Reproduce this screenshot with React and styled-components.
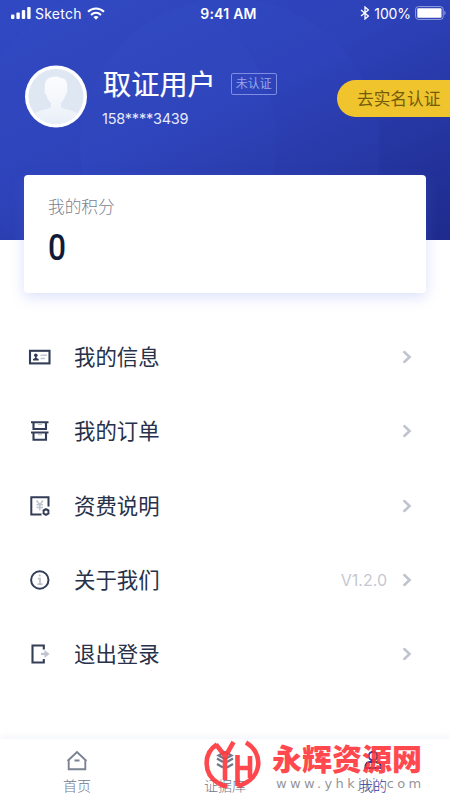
import styled, { createGlobalStyle } from "styled-components";

const GlobalStyle = createGlobalStyle`
  * {
    box-sizing: border-box;
  }
  body {
    margin: 0;
    background-color: white;
    font-family: Inter, "Noto Sans CJK SC", sans-serif;
  }
`;

const Container = styled.div`
  position: relative;
  width: 450px;
  height: 799px;
  overflow: hidden;
  display: flex;
  flex-direction: column;
  background-color: white;
`;

const Header = styled.header`
  position: relative;
  height: 240px;
  flex-shrink: 0;
  color: white;
  background: linear-gradient(155deg, #3049c2 0%, #2d41b8 45%, #1e2b8c 100%);
`;

const HeaderShapes = styled.svg`
  position: absolute;
  top: 0;
  left: 0;
`;

const StatusBar = styled.div`
  position: relative;
  height: 26px;
  padding: 0 4px 0 11px;
  display: grid;
  grid-template-columns: 1fr auto 1fr;
  align-items: center;
  font-size: 14px;
`;

const StatusGroup = styled.div`
  display: flex;
  align-items: center;
  justify-content: ${(props) => (props.$end ? "flex-end" : "flex-start")};
  gap: ${(props) => (props.$end ? "4px" : "5px")};
`;

const Carrier = styled.span`
  margin-left: -1px;
  font-size: 14px;
  letter-spacing: 0.25px;
`;

const Clock = styled.span`
  font-size: 14px;
  font-weight: 600;
  letter-spacing: 0.25px;
`;

const Percent = styled.span`
  font-size: 14px;
  letter-spacing: -0.1px;
`;

const Profile = styled.div`
  position: relative;
  display: flex;
  align-items: flex-start;
  padding: 39px 0 0 25px;
`;

const Info = styled.div`
  margin-left: 15px;
`;

const NameRow = styled.div`
  display: flex;
  align-items: center;
  height: 37px;
`;

const Name = styled.h1`
  margin: 3px 0 0 1px;
  font-size: 28.2px;
  line-height: 37px;
  font-weight: 400;
  -webkit-text-stroke: 0.2px;
`;

const Tag = styled.span`
  width: 46px;
  height: 22px;
  margin-left: 15px;
  border: 1px solid #7f8ee0;
  border-radius: 2px;
  color: #98a5ea;
  font-size: 12px;
  line-height: 20px;
  text-align: center;
`;

const Phone = styled.div`
  margin-top: 7px;
  font-size: 14.5px;
  line-height: 20px;
  letter-spacing: -0.22px;
  color: #e6e9fa;
`;

const VerifyButton = styled.button`
  width: 113px;
  height: 37px;
  margin: 15px 0 0 auto;
  padding: 0 0 1px 20px;
  border: none;
  border-radius: 19px 0 0 19px;
  background-color: #efc42d;
  color: #735c0b;
  font-family: inherit;
  font-size: 16.7px;
  text-align: left;
  white-space: nowrap;
  cursor: pointer;
`;

const Card = styled.section`
  position: relative;
  height: 118px;
  flex-shrink: 0;
  margin: -65px 24px 0;
  padding: 20px 24px;
  border-radius: 4px;
  background-color: white;
  box-shadow: 0 4px 14px rgba(92, 112, 230, 0.22);
`;

const CardLabel = styled.div`
  font-size: 16.7px;
  line-height: 25px;
  font-weight: 300;
  color: #797f90;
`;

const Points = styled.div`
  width: max-content;
  margin-top: 8px;
  font-family: Roboto, sans-serif;
  font-size: 36px;
  line-height: 40px;
  font-weight: 500;
  color: #101b38;
  transform: scaleX(0.88);
  transform-origin: left;
`;

const Menu = styled.nav`
  flex: 1;
  padding: 27px 38px 0 28px;
`;

const MenuItem = styled.a`
  display: flex;
  align-items: center;
  height: 74.3px;
  cursor: pointer;
`;

const MenuLabel = styled.span`
  flex: 1;
  margin-left: 22px;
  font-size: 21.4px;
  line-height: 30px;
  font-weight: 400;
  color: #273149;
`;

const Version = styled.span`
  margin-right: 15px;
  font-size: 16px;
  color: #c5c8d3;
`;

const TabBar = styled.footer`
  height: 60px;
  flex-shrink: 0;
  padding-left: 3px;
  display: grid;
  grid-template-columns: repeat(3, 148px);
  background-color: white;
  box-shadow: 0 -3px 6px rgba(80, 110, 220, 0.06);
`;

const Tab = styled.a`
  display: flex;
  flex-direction: column;
  align-items: center;
  padding-top: 11px;
  font-size: 14px;
  line-height: 20px;
  font-weight: 300;
  color: ${(props) => (props.$active ? "#2b3a9d" : "#70788c")};

  svg {
    margin-bottom: 4px;
  }
`;

const Watermark = styled.div`
  position: absolute;
  left: 204px;
  top: 740px;
  display: flex;
`;

const WatermarkText = styled.div`
  margin-left: 11px;
  width: 160px;
`;

const SiteName = styled.div`
  height: 35px;
  font-size: 30px;
  line-height: 39px;
  font-weight: 900;
  white-space: nowrap;
  color: rgb(255, 48, 54);
  opacity: 0.88;
`;

const SiteUrl = styled.div`
  margin-left: 4px;
  font-family: "DejaVu Sans", sans-serif;
  font-size: 13px;
  line-height: 17px;
  letter-spacing: 3.4px;
  white-space: nowrap;
  color: rgba(110, 110, 115, 0.75);
`;

const SignalIcon = () => (
  <svg width="20" height="12" viewBox="0 0 20 12" fill="white">
    <rect x="0" y="7.5" width="3.4" height="4.5" rx="1" />
    <rect x="5.4" y="5.5" width="3.4" height="6.5" rx="1" />
    <rect x="10.8" y="3" width="3.4" height="9" rx="1" />
    <rect x="16.2" y="0" width="3.4" height="12" rx="1" />
  </svg>
);

const WifiIcon = () => (
  <svg width="18" height="13" viewBox="0 0 18 13" fill="none" stroke="white" strokeWidth="2.1">
    <path d="M1 4.7C5.5 0.4 12.5 0.4 17 4.7" />
    <path d="M4 8C7 5.2 11 5.2 14 8" />
    <path d="M6.4 10C8 8.6 10 8.6 11.6 10L9 12.7Z" fill="white" stroke="none" />
  </svg>
);

const BluetoothIcon = () => (
  <svg width="10" height="14" viewBox="0 0 10 14" fill="none" stroke="white" strokeWidth="1.3">
    <path d="M1 4L8.4 10L5 13V1L8.4 4L1 10" />
  </svg>
);

const BatteryIcon = () => (
  <svg width="31" height="14" viewBox="0 0 31 14">
    <rect x="0.6" y="0.6" width="27.6" height="12.8" rx="2.8" fill="none" stroke="#93a0df" />
    <rect x="2.3" y="2.3" width="24.2" height="9.4" rx="1" fill="white" />
    <path d="M29.4 4.8C31 5.5 31 8.5 29.4 9.2Z" fill="#93a0df" />
  </svg>
);

const Avatar = () => (
  <svg width="62" height="63" viewBox="0 0 62 63">
    <defs>
      <clipPath id="face">
        <circle cx="31" cy="31.5" r="27.5" />
      </clipPath>
      <linearGradient id="bust" x1="0" y1="0" x2="0" y2="1">
        <stop offset="0" stopColor="#fbfcfe" />
        <stop offset="0.55" stopColor="#f2f6fb" />
        <stop offset="1" stopColor="#e6edf7" />
      </linearGradient>
    </defs>
    <circle cx="31" cy="31.5" r="31" fill="white" />
    <circle cx="31" cy="31.5" r="27.5" fill="#dfe7f2" />
    <g clipPath="url(#face)">
      <path
        fill="url(#bust)"
        d="M20 23C19 16 23 12 28 12C32 11 34 12 36 13C41 13 43 18 42 24C43 26 42 29 40.5 30C39.5 34 37 36.5 36 38V42C38 45 49 44 54 50V63H8V50C13 44 24 45 26 42V38C24 36 22 34 21.5 30C19.5 29 19 26 20 23Z"
      />
    </g>
  </svg>
);

const CardIcon = () => (
  <svg width="24" height="24" viewBox="0 0 24 24">
    <rect x="2" y="5.8" width="19.5" height="12.6" fill="none" stroke="#343d57" strokeWidth="2.1" />
    <circle cx="7.8" cy="10.2" r="1.8" fill="#343d57" />
    <path d="M7 11H8.6V13L10.7 14V15.6H5V14L7 13Z" fill="#343d57" />
    <path d="M12.5 10.3H19M12.5 13.6H17" stroke="#c3c7d2" strokeWidth="1.5" />
  </svg>
);

const OrderIcon = () => (
  <svg width="24" height="24" viewBox="0 0 24 24" fill="none" stroke="#343d57" strokeWidth="2.1">
    <path d="M3 3.3H20.5M5.5 3.3V10H18V3.3M3 13.5H20.5M5.5 13.5V20.8H18V13.5" />
    <path d="M10 5.3H14M10 15.6H14" stroke="#c3c7d2" strokeWidth="1.3" />
  </svg>
);

const FeeIcon = () => (
  <svg width="24" height="24" viewBox="0 0 24 24" fill="none" stroke="#343d57" strokeWidth="2">
    <path d="M13.5 20.5H3.3V3.3H20.5V12.5" />
    <circle cx="18" cy="18" r="2.5" strokeWidth="1.8" />
    <path d="M18 14.2V15.5M18 20.5V21.8M14.7 16.1L15.8 16.7M20.2 19.3L21.3 19.9M14.7 19.9L15.8 19.3M20.2 16.7L21.3 16.1" strokeWidth="1.4" />
    <path d="M8.5 6.5L11.8 10.7L15 6.5M8.5 10.7H15M8.5 13.5H15M11.8 10.7V16.5" stroke="#bfc3cf" strokeWidth="1.5" />
  </svg>
);

const AboutIcon = () => (
  <svg width="24" height="24" viewBox="0 0 24 24" fill="none">
    <circle cx="11.8" cy="12" r="8.7" stroke="#343d57" strokeWidth="2" />
    <path d="M11.7 6.5V8.5M9.7 10.7H12V16M9.5 16.2H14.5" stroke="#bfc3cf" strokeWidth="1.8" />
  </svg>
);

const LogoutIcon = () => (
  <svg width="24" height="24" viewBox="0 0 24 24" fill="none">
    <path d="M15.8 7.5V3.5H4.5V20.5H15.8V17" stroke="#343d57" strokeWidth="2.1" />
    <path d="M13 12H17" stroke="#bfc3cf" strokeWidth="2.2" />
    <path d="M16.5 8L21.5 12L16.5 16Z" fill="#bfc3cf" />
  </svg>
);

const Chevron = () => (
  <svg width="10" height="14" viewBox="0 0 10 14" fill="none">
    <path d="M2.3 2L7.6 7L2.3 12" stroke="#c0c4cf" strokeWidth="2.5" strokeLinecap="round" />
  </svg>
);

const HomeIcon = () => (
  <svg width="22" height="22" viewBox="0 0 22 22" fill="none" stroke="#7b8293" strokeWidth="1.9">
    <path d="M1.5 11L11 2L20.5 11M2.7 10V19.2H19.3V10M8.5 10.5H13.5" />
  </svg>
);

const EvidenceIcon = () => (
  <svg width="22" height="22" viewBox="0 0 22 22" fill="none" stroke="#70788c" strokeWidth="2.2">
    <path d="M11 2L17.5 5.5L11 9L4.5 5.5ZM3 8.5L9 12M19 8.5L13 12M3 14L9 17.5M19 14L13 17.5" />
  </svg>
);

const MineIcon = () => (
  <svg width="22" height="22" viewBox="0 0 22 22" fill="none" stroke="#2b3a9d" strokeWidth="1.9">
    <circle cx="11" cy="6" r="4.2" />
    <path d="M3.5 18V16C3.5 13.5 6 12 8 12H14C16 12 18.5 13.5 18.5 16V18Z" />
  </svg>
);

const WatermarkLogo = () => (
  <svg width="57" height="50" viewBox="0 0 57 50">
    <g fill="none" stroke="#ff3b40" strokeWidth="4.6" opacity="0.93">
      <path d="M13 4.5C-1 13 -1 34 14 43C17 45 20 46 23 46" />
      <path d="M12 4.5L21 16M29.5 2L21 17V40" />
      <path d="M33.5 15V46M33.5 28H46M46 16V38" />
      <path d="M42 2.5C60 13 59 39 34 46" />
    </g>
  </svg>
);

const items = [
  { label: "我的信息", icon: <CardIcon /> },
  { label: "我的订单", icon: <OrderIcon /> },
  { label: "资费说明", icon: <FeeIcon /> },
  { label: "关于我们", icon: <AboutIcon />, version: "V1.2.0" },
  { label: "退出登录", icon: <LogoutIcon /> },
];

const App = () => {
  return (
    <Container>
      <GlobalStyle />
      <Header>
        <HeaderShapes width="450" height="240" viewBox="0 0 450 240">
          <circle cx="230" cy="148" r="150" fill="#4660dc" fillOpacity="0.07" />
          <circle cx="126" cy="140" r="151" fill="#4660dc" fillOpacity="0.06" />
        </HeaderShapes>
        <StatusBar>
          <StatusGroup>
            <SignalIcon />
            <Carrier>Sketch</Carrier>
            <WifiIcon />
          </StatusGroup>
          <Clock>9:41 AM</Clock>
          <StatusGroup $end>
            <BluetoothIcon />
            <Percent>100%</Percent>
            <BatteryIcon />
          </StatusGroup>
        </StatusBar>
        <Profile>
          <Avatar />
          <Info>
            <NameRow>
              <Name>取证用户</Name>
              <Tag>未认证</Tag>
            </NameRow>
            <Phone>158****3439</Phone>
          </Info>
          <VerifyButton>去实名认证</VerifyButton>
        </Profile>
      </Header>

      <Card>
        <CardLabel>我的积分</CardLabel>
        <Points>0</Points>
      </Card>

      <Menu>
        {items.map((item) => (
          <MenuItem key={item.label}>
            {item.icon}
            <MenuLabel>{item.label}</MenuLabel>
            {item.version && <Version>{item.version}</Version>}
            <Chevron />
          </MenuItem>
        ))}
      </Menu>

      <TabBar>
        <Tab>
          <HomeIcon />
          首页
        </Tab>
        <Tab>
          <EvidenceIcon />
          证据库
        </Tab>
        <Tab $active>
          <MineIcon />
          我的
        </Tab>
      </TabBar>

      <Watermark>
        <WatermarkLogo />
        <WatermarkText>
          <SiteName>永辉资源网</SiteName>
          <SiteUrl>www.yhkjjj.com</SiteUrl>
        </WatermarkText>
      </Watermark>
    </Container>
  );
};

export default App;
